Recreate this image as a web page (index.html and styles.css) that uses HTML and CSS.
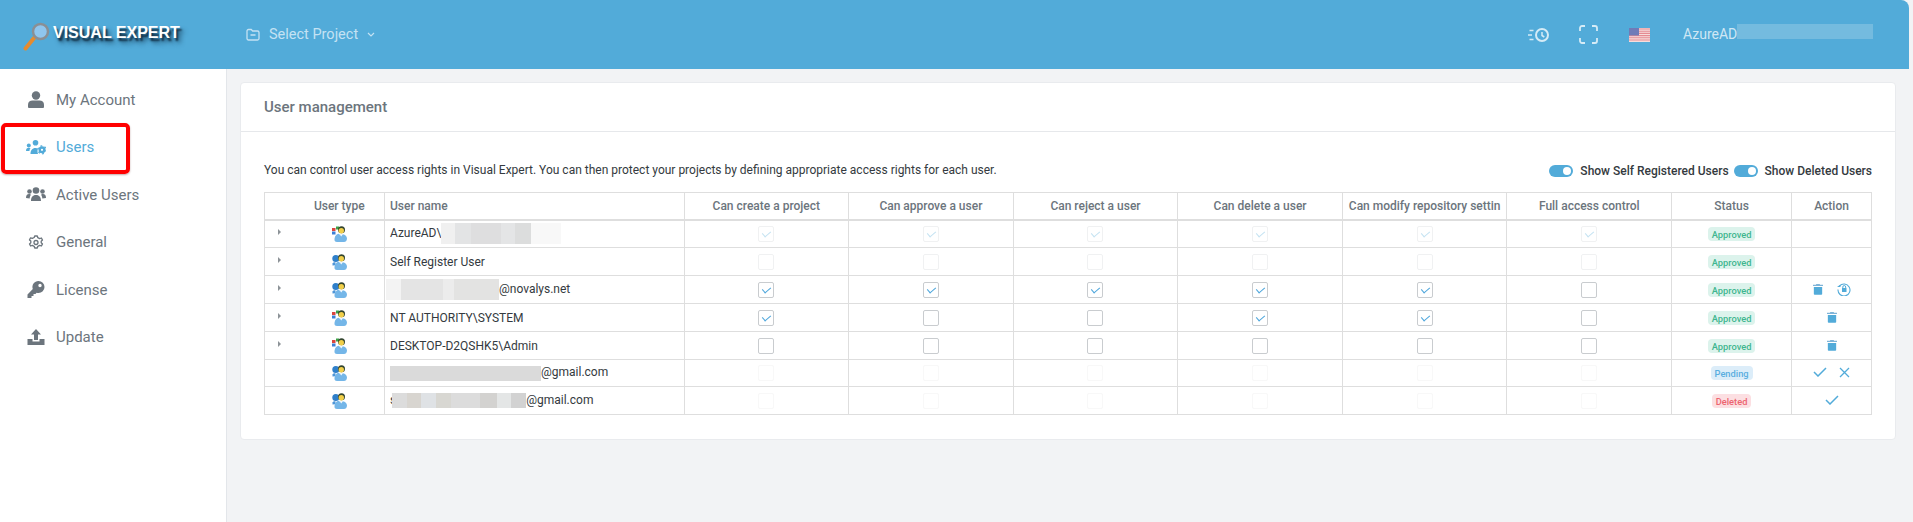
FILE: index.html
```html
<!DOCTYPE html>
<html lang="en">
<head>
<meta charset="utf-8">
<title>User management</title>
<link rel="stylesheet" href="styles.css">
</head>
<body>
<svg class="defs" width="0" height="0" aria-hidden="true">
  <symbol id="ad" viewBox="0 0 15 16">
    <rect x="0" y="2" width="3.500" height="3" fill="#d9463e"/>
    <rect x="0" y="5.500" width="3.500" height="3" fill="#3b7fd6"/>
    <rect x="4" y="0.500" width="3" height="3" fill="#3ea34a"/>
    <circle cx="9.500" cy="3.800" r="3.500" fill="#33452f"/>
    <circle cx="9.300" cy="4.800" r="2.700" fill="#f1cf4a"/>
    <path d="M2.500 14c0-3.500 1.500-6 4.500-6.300l2.500 2 1.300-1.500c2.500.3 4.200 2 4.200 4.300 0 2.500-1.500 3.500-3 3.500H5c-1.500 0-2.500-.8-2.500-2z" fill="#74b6e8"/>
    <path d="M7 8l2.500 2.500L10.500 8.500z" fill="#e8f3fb"/>
  </symbol>
  <symbol id="self" viewBox="0 0 15 16">
    <circle cx="3.800" cy="4.500" r="3.500" fill="#2f7fc9"/>
    <path d="M.5 9.500c.5-1.200 2-1.500 3-1.200v3l-3 .2z" fill="#4f96d8"/>
    <circle cx="9.500" cy="3.800" r="3.500" fill="#33452f"/>
    <circle cx="9.300" cy="4.800" r="2.700" fill="#f1cf4a"/>
    <path d="M2.500 14c0-3.500 1.500-6 4.500-6.300l2.500 2 1.300-1.500c2.500.3 4.200 2 4.200 4.300 0 2.500-1.500 3.500-3 3.500H5c-1.500 0-2.500-.8-2.500-2z" fill="#74b6e8"/>
    <path d="M7 8l2.500 2.500L10.500 8.500z" fill="#e8f3fb"/>
  </symbol>
  <symbol id="trash" viewBox="0 0 12 14">
    <path d="M4 1h4l.5 1H12v1.500H0V2h3.500z" fill="#7fb4d8"/>
    <path d="M1 4.500h10V13a1 1 0 0 1-1 1H2a1 1 0 0 1-1-1z" fill="#52abd9"/>
  </symbol>
  <symbol id="tick" viewBox="0 0 14 10">
    <path d="M1 5l4 4 8-8" fill="none" stroke="#52abd9" stroke-width="1.500"/>
  </symbol>
</svg>

<header class="topbar">
  <div class="logo">
    <svg class="logo-mark" width="28" height="29" viewBox="0 0 28 29" aria-hidden="true">
      <path d="M2.500 26.500L11 16" stroke="#e58b2f" stroke-width="4" stroke-linecap="round"/>
      <circle cx="17.500" cy="9.500" r="7.500" fill="#8fc6ee" stroke="#8a8f94" stroke-width="2.500"/>
    </svg>
    <span class="logo-text">VISUAL EXPERT</span>
  </div>
  <div class="project">
    <svg width="14" height="13" viewBox="0 0 14 13" aria-hidden="true">
      <path d="M1 3a1.500 1.500 0 0 1 1.500-1.500h2.700l1.500 1.500h4.800A1.500 1.500 0 0 1 13 4.500v6a1.500 1.500 0 0 1-1.500 1.500h-9A1.500 1.500 0 0 1 1 10.500zM4.500 7h5" fill="none" stroke="#c4e2f3" stroke-width="1.300"/>
    </svg>
    <span>Select Project</span>
    <svg width="8" height="5" viewBox="0 0 8 5" aria-hidden="true"><path d="M1 1l3 3 3-3" fill="none" stroke="#c4e2f3" stroke-width="1.200"/></svg>
  </div>
  <div class="top-actions">
    <svg width="21" height="16" viewBox="0 0 21 16" aria-hidden="true">
      <circle cx="14" cy="8" r="6" fill="none" stroke="#d5ebf6" stroke-width="2"/>
      <path d="M14 5v3.500l2.300 1.500M1.500 3.500h4M0 8h4M1.500 12.500h4" fill="none" stroke="#d5ebf6" stroke-width="1.500"/>
    </svg>
    <svg class="full" width="19" height="19" viewBox="0 0 19 19" aria-hidden="true">
      <path d="M1 6V3a2 2 0 0 1 2-2h3M13 1h3a2 2 0 0 1 2 2v3M18 13v3a2 2 0 0 1-2 2h-3M6 18H3a2 2 0 0 1-2-2v-3" fill="none" stroke="#d5ebf6" stroke-width="1.800"/>
    </svg>
    <svg class="flag" width="21" height="14" viewBox="0 0 21 14" aria-hidden="true">
      <rect width="21" height="14" fill="#f6dcdc"/>
      <path d="M0 1h21M0 3.200h21M0 5.400h21M0 7.600h21M0 9.800h21M0 12h21" stroke="#e58b92" stroke-width="1.100"/>
      <rect width="10" height="7.500" fill="#6f7bb8"/>
    </svg>
    <div class="account">AzureAD<span class="mask-top"></span></div>
  </div>
</header>

<div class="layout">
  <nav class="sidebar">
    <a class="nav-item">
      <svg width="16" height="17" viewBox="0 0 16 17" aria-hidden="true"><circle cx="8" cy="4.500" r="4.200" fill="#6c757d"/><path d="M0 16v-2.500C0 11 2 9.500 4.500 9.500h7c2.500 0 4.500 1.500 4.500 4V16a1 1 0 0 1-1 1H1a1 1 0 0 1-1-1z" fill="#6c757d"/></svg>
      <span>My Account</span>
    </a>
    <a class="nav-item active">
      <svg width="20" height="15" viewBox="0 0 20 15" aria-hidden="true"><circle cx="2.800" cy="5.500" r="2" fill="#52abd9"/><circle cx="9.500" cy="2.800" r="2.800" fill="#52abd9"/><path d="M0 11c0-2 1-3.200 2.800-3.200.8 0 1.300.2 1.700.5-.8.8-1 1.800-1 2.700zM4.500 14c0-3.500 1.700-6 5-6 1 0 1.800.2 2.500.6-.7 1.200-.6 3.800 0 5.400z" fill="#52abd9"/><circle cx="16" cy="9.800" r="2.300" fill="none" stroke="#52abd9" stroke-width="2.400"/><circle cx="16" cy="9.800" r="4" fill="none" stroke="#52abd9" stroke-width="1.200" stroke-dasharray="1.800 2.400"/></svg>
      <span>Users</span>
    </a>
    <a class="nav-item">
      <svg width="20" height="15" viewBox="0 0 20 15" aria-hidden="true"><circle cx="3.500" cy="4.500" r="2.300" fill="#6c757d"/><circle cx="16.500" cy="4.500" r="2.300" fill="#6c757d"/><circle cx="10" cy="3.500" r="3.300" fill="#6c757d"/><path d="M0 11c0-2.500 1-4 3-4 1 0 1.500.3 2 .7-.8 1-1.300 2.200-1.300 3.800zM20 11c0-2.500-1-4-3-4-1 0-1.500.3-2 .7.800 1 1.300 2.200 1.300 3.800zM5 14c0-3.500 1.500-6 5-6s5 2.500 5 6z" fill="#6c757d"/></svg>
      <span>Active Users</span>
    </a>
    <a class="nav-item">
      <svg width="20" height="15" viewBox="0 0 20 15" aria-hidden="true"><path d="M8.700 1h2.600l.5 1.700 1.900.9 1.700-.6 1.100 2.100-1.300 1.200v1.400l1.300 1.200-1.100 2.100-1.700-.6-1.900.9-.5 1.700H8.700l-.5-1.700-1.900-.9-1.700.6-1.100-2.100 1.300-1.200V6.100L3.500 4.900 4.600 2.800l1.700.6 1.900-.9z" fill="none" stroke="#6c757d" stroke-width="1.300" stroke-linejoin="round"/><circle cx="10" cy="7.500" r="2" fill="none" stroke="#6c757d" stroke-width="1.300"/></svg>
      <span>General</span>
    </a>
    <a class="nav-item">
      <svg width="17" height="17" viewBox="0 0 17 17" aria-hidden="true"><path fill-rule="evenodd" d="M11 0a6 6 0 0 1 0 12c-.7 0-1.300-.1-1.900-.3L8 13H6v2H4v2H0v-3.500l5.300-5.400A6 6 0 0 1 11 0zm1.500 2.800a1.700 1.700 0 1 0 0 3.400 1.700 1.700 0 0 0 0-3.400z" fill="#6c757d"/></svg>
      <span>License</span>
    </a>
    <a class="nav-item">
      <svg width="17" height="16" viewBox="0 0 17 16" aria-hidden="true"><path d="M8.500 0l5 5.500H10.500V11h-4V5.500H3.500zM0 10h5v2.500h7V10h5v6H0z" fill="#6c757d"/></svg>
      <span>Update</span>
    </a>
  </nav>
  <div class="highlight"></div>

  <main class="content">
    <section class="card">
      <h1 class="card-title">User management</h1>
      <div class="card-body">
        <div class="intro">
          <p>You can control user access rights in Visual Expert. You can then protect your projects by defining appropriate access rights for each user.</p>
          <div class="toggles">
            <span class="toggle"></span><b>Show Self Registered Users</b>
            <span class="toggle"></span><b>Show Deleted Users</b>
          </div>
        </div>
        <table class="users">
          <colgroup>
            <col class="c-exp"><col class="c-type"><col class="c-name">
            <col class="c-perm"><col class="c-perm"><col class="c-perm"><col class="c-perm"><col class="c-perm"><col class="c-perm">
            <col class="c-status"><col class="c-action">
          </colgroup>
          <thead>
            <tr>
              <th class="no-line"></th><th>User type</th><th class="left">User name</th>
              <th>Can create a project</th><th>Can approve a user</th><th>Can reject a user</th><th>Can delete a user</th><th>Can modify repository settin</th><th>Full access control</th>
              <th>Status</th><th>Action</th>
            </tr>
          </thead>
          <tbody>
            <tr>
              <td class="no-line"><i class="caret"></i></td><td><svg class="ut"><use href="#ad"/></svg></td>
              <td class="left">AzureAD\<span class="mask m1"></span></td>
              <td><i class="cb off on"></i></td><td><i class="cb off on"></i></td><td><i class="cb off on"></i></td><td><i class="cb off on"></i></td><td><i class="cb off on"></i></td><td><i class="cb off on"></i></td>
              <td><span class="badge ok">Approved</span></td><td></td>
            </tr>
            <tr>
              <td class="no-line"><i class="caret"></i></td><td><svg class="ut"><use href="#self"/></svg></td>
              <td class="left">Self Register User</td>
              <td><i class="cb off"></i></td><td><i class="cb off"></i></td><td><i class="cb off"></i></td><td><i class="cb off"></i></td><td><i class="cb off"></i></td><td><i class="cb off"></i></td>
              <td><span class="badge ok">Approved</span></td><td></td>
            </tr>
            <tr>
              <td class="no-line"><i class="caret"></i></td><td><svg class="ut"><use href="#self"/></svg></td>
              <td class="left"><span class="mask m2"></span>@novalys.net</td>
              <td><i class="cb on"></i></td><td><i class="cb on"></i></td><td><i class="cb on"></i></td><td><i class="cb on"></i></td><td><i class="cb on"></i></td><td><i class="cb"></i></td>
              <td><span class="badge ok">Approved</span></td>
              <td><span class="acts wide"><svg class="ic-trash"><use href="#trash"/></svg>
                <svg width="14" height="14" viewBox="0 0 14 14" aria-hidden="true"><path d="M2.500 4A6 6 0 1 1 1 7.500" fill="none" stroke="#52abd9" stroke-width="1.100"/><path d="M0 5h3.500V2.500z" fill="#52abd9"/><rect x="5" y="6" width="4.500" height="4" fill="#52abd9"/><path d="M5.800 6V5a1.400 1.400 0 0 1 2.900 0v1" fill="none" stroke="#52abd9"/></svg></span></td>
            </tr>
            <tr>
              <td class="no-line"><i class="caret"></i></td><td><svg class="ut"><use href="#ad"/></svg></td>
              <td class="left">NT AUTHORITY\SYSTEM</td>
              <td><i class="cb on"></i></td><td><i class="cb"></i></td><td><i class="cb"></i></td><td><i class="cb on"></i></td><td><i class="cb on"></i></td><td><i class="cb"></i></td>
              <td><span class="badge ok">Approved</span></td>
              <td><span class="acts"><svg class="ic-trash"><use href="#trash"/></svg></span></td>
            </tr>
            <tr>
              <td class="no-line"><i class="caret"></i></td><td><svg class="ut"><use href="#ad"/></svg></td>
              <td class="left">DESKTOP-D2QSHK5\Admin</td>
              <td><i class="cb"></i></td><td><i class="cb"></i></td><td><i class="cb"></i></td><td><i class="cb"></i></td><td><i class="cb"></i></td><td><i class="cb"></i></td>
              <td><span class="badge ok">Approved</span></td>
              <td><span class="acts"><svg class="ic-trash"><use href="#trash"/></svg></span></td>
            </tr>
            <tr class="short">
              <td class="no-line"></td><td><svg class="ut"><use href="#self"/></svg></td>
              <td class="left"><span class="mask m3"></span>@gmail.com</td>
              <td><i class="cb faint"></i></td><td><i class="cb faint"></i></td><td><i class="cb faint"></i></td><td><i class="cb faint"></i></td><td><i class="cb faint"></i></td><td><i class="cb faint"></i></td>
              <td><span class="badge wait">Pending</span></td>
              <td><span class="acts"><svg class="ic-tick"><use href="#tick"/></svg>
                <svg width="11" height="11" viewBox="0 0 11 11" aria-hidden="true"><path d="M1 1l9 9M10 1l-9 9" stroke="#52abd9" stroke-width="1.300"/></svg></span></td>
            </tr>
            <tr>
              <td class="no-line"></td><td><svg class="ut"><use href="#self"/></svg></td>
              <td class="left">s<span class="mask m4"></span>@gmail.com</td>
              <td><i class="cb faint"></i></td><td><i class="cb faint"></i></td><td><i class="cb faint"></i></td><td><i class="cb faint"></i></td><td><i class="cb faint"></i></td><td><i class="cb faint"></i></td>
              <td><span class="badge del">Deleted</span></td>
              <td><span class="acts"><svg class="ic-tick"><use href="#tick"/></svg></span></td>
            </tr>
          </tbody>
        </table>
      </div>
    </section>
  </main>
</div>
</body>
</html>
```
FILE: styles.css
```css
* { box-sizing: border-box; }
html, body { margin: 0; height: 100%; }
body {
  background: #f2f3f5;
  font-family: Roboto, "Liberation Sans", sans-serif;
  font-size: 12px;
  color: #343a40;
  overflow: hidden;
}
.defs { position: absolute; }

.topbar {
  width: 1909px;
  height: 69px;
  background: #52abd9;
  border-top-right-radius: 8px;
  display: flex;
  align-items: center;
  color: #c4e2f3;
}
.logo { width: 246px; padding-left: 23px; display: flex; align-items: center; height: 100%; }
.logo-mark { flex: none; margin-top: 3px; margin-right: 2px; }
.logo-text {
  font-family: "Liberation Sans", Arial, sans-serif;
  font-weight: 700;
  font-size: 16px;
  color: #fff;
  white-space: nowrap;
  margin-top: -3px;
  text-shadow: 2px 3px 2px #123046, 4px 5px 5px #1f4d6b;
}
.project { display: flex; align-items: center; gap: 9px; font-size: 14.500px; }
.top-actions { margin-left: auto; display: flex; align-items: center; height: 100%; }
.top-actions .full { margin-left: 30px; }
.top-actions .flag { margin-left: 31px; }
.account { margin-left: 33px; width: 226px; font-size: 14px; display: flex; align-items: center; color: #cfe7f4; margin-top: -2px; white-space: nowrap; }
.mask-top { display: inline-block; width: 136px; height: 15px; background: #74bbdf; margin-top: -5px; }

.layout { display: flex; position: relative; height: 453px; }
.sidebar {
  width: 227px;
  flex: none;
  background: #fff;
  border-right: 1px solid #e3e6ea;
  padding-top: 7px;
}
.nav-item {
  display: flex;
  align-items: center;
  height: 47.500px;
  padding-left: 26px;
  font-size: 15px;
  color: #6c757d;
}
.nav-item svg { width: 20px; margin-right: 10px; flex: none; }
.nav-item.active { color: #52abd9; }
.highlight {
  position: absolute;
  left: 1px;
  top: 54px;
  width: 129px;
  height: 51px;
  border: 4px solid #f00;
  border-radius: 5px;
  box-shadow: 0 1px 2px rgba(80, 0, 0, .35);
}

.content { flex: none; width: 1669px; padding: 13px 0 0 13px; }
.card {
  background: #fff;
  border: 1px solid #e9ebee;
  border-radius: 4px;
  height: 358px;
}
.card-title {
  margin: 0;
  height: 49px;
  padding: 15px 23px 0;
  border-bottom: 1px solid #e6e8eb;
  font-size: 15px;
  font-weight: 500;
  color: #6c757d;
  line-height: 18px;
}
.card-body { padding: 0 24px 0 23px; }
.intro { display: flex; justify-content: space-between; align-items: flex-end; height: 60px; }
.intro p { margin: 0; font-size: 12px; line-height: 14px; padding-bottom: 15px; color: #343a40; }
.toggles { display: flex; align-items: center; font-size: 12px; padding-bottom: 14px; margin-right: -1px; }
.toggles b { font-weight: 500; color: #343a40; margin-right: 5px; margin-left: 7px; line-height: 14px; }
.toggles b:last-child { margin-right: 0; }
.toggle { width: 24px; height: 12px; border-radius: 6px; background: #52abd9; position: relative; }
.toggle::after { content: ""; position: absolute; right: 2px; top: 2px; width: 8px; height: 8px; border-radius: 50%; background: #fff; }

.users { table-layout: fixed; border-collapse: collapse; width: 1607px; font-size: 12px; }
.c-exp { width: 30px; }
.c-type { width: 90px; }
.c-name { width: 299.500px; }
.c-perm { width: 164.600px; }
.c-status { width: 120px; }
.c-action { width: 79.900px; }
.users th, .users td { border: 1px solid #dedede; padding: 0; text-align: center; vertical-align: middle; overflow: hidden; white-space: nowrap; }
.users th { height: 27px; font-weight: 500; color: #6c757d; border-bottom: 2px solid #dedede; padding: 0 4px; }
.users td { height: 28px; color: #343a40; }
.users tr.short td { height: 27px; }
.users .left { text-align: left; padding-left: 5px; }
.users .no-line { border-right: 0; }
.users .no-line + th, .users .no-line + td { border-left: 0; }

.caret { display: block; margin: -3px 0 0 13px; width: 0; height: 0; border-left: 3px solid #8d9398; border-top: 3px solid transparent; border-bottom: 3px solid transparent; }
.ut { display: block; width: 15px; height: 16px; margin: 0 auto; }

.cb { display: block; position: relative; width: 16px; height: 16px; margin: 0 auto; border: 1px solid #c9cccf; border-radius: 2px; background: #fff; }
.cb.off { border-color: #f0f1f2; }
.cb.faint { border-color: #f8f8f8; }
.cb.on::after {
  content: "";
  position: absolute;
  left: 5px;
  top: 2.500px;
  width: 4px;
  height: 7px;
  border: solid #4da6dc;
  border-width: 0 1.300px 1.300px 0;
  transform: rotate(50deg);
}
.cb.off.on::after { border-color: #c5e3f2; }

.badge { display: inline-block; height: 14px; line-height: 15px; border-radius: 4px; padding: 0 4px; font-size: 9.300px; font-weight: 500; vertical-align: middle; }
.badge.ok { background: #dcf3ec; color: #3fb68f; }
.badge.wait { background: #dcedf9; color: #5aaee0; }
.badge.del { background: #fcdfe2; color: #ec6470; }

.acts { display: flex; justify-content: center; align-items: center; gap: 12px; margin-top: -2px; }
.acts.wide { gap: 14px; }
.ic-trash { width: 10px; height: 12px; }
.ic-tick { width: 14px; height: 10px; }

.mask { display: inline-block; vertical-align: middle; height: 21px; background: #e5e5e5; }
.m1 { width: 120px; background: linear-gradient(90deg, #f0f0f0 0 12%, #e3e4e5 12% 25%, #dededf 25% 50%, #e4e5e6 50% 62%, #dcdddd 62% 75%, #f8f8f8 75%); }
.m2 { width: 113px; margin-left: -4px; background: linear-gradient(90deg, #f3f3f3 0 13%, #e4e4e4 13% 50%, #ececec 50% 60%, #e3e3e2 60%); }
.m3 { width: 151px; height: 15px; background: #dadada; }
.m4 { width: 134px; height: 15px; margin-left: -4px; background: linear-gradient(90deg, #dcdcdc 0 11%, #d8d5d0 11% 22%, #dfe2e5 22% 33%, #d8d7d2 33% 44%, #dcdcdc 44% 66%, #d3d2d0 66% 78%, #e4e6e6 78% 89%, #d2d2d2 89%); }
```
